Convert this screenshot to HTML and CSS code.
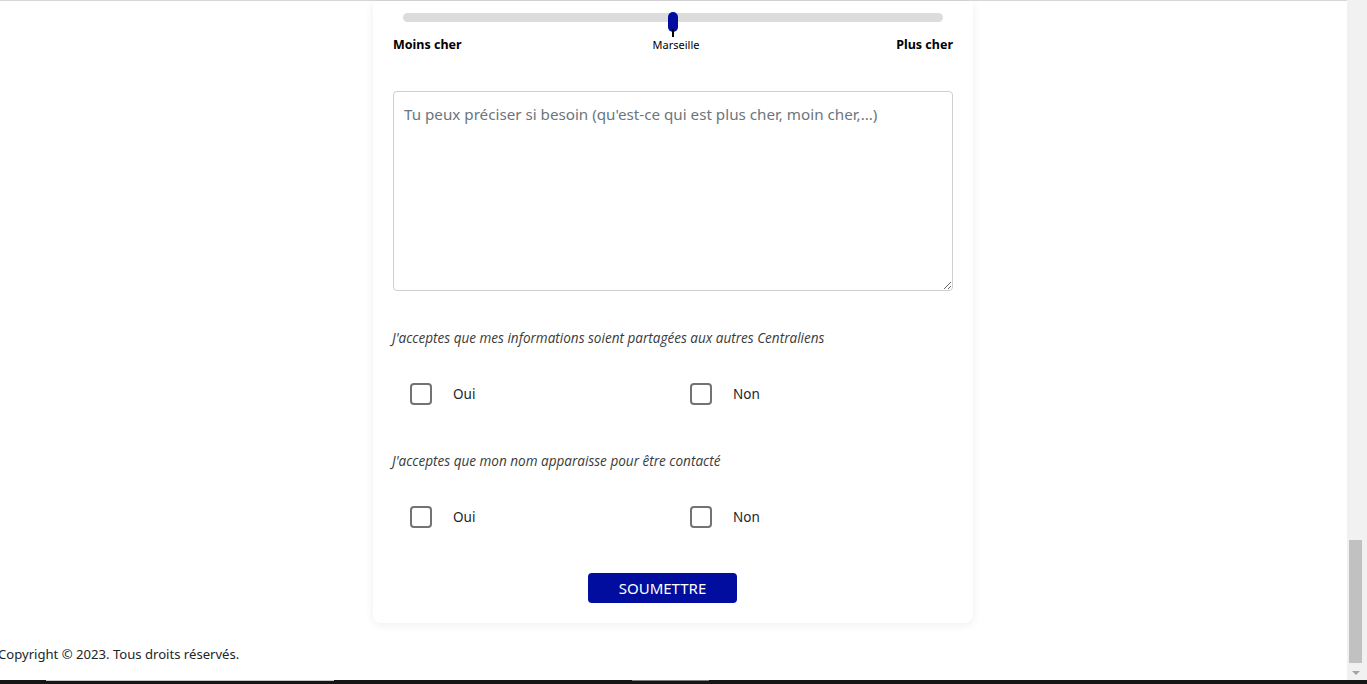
FILE: index.html
```html
<!DOCTYPE html>
<html lang="fr">
<head>
<meta charset="utf-8">
<title>Formulaire</title>
<link rel="stylesheet" href="styles.css">
</head>
<body>
<div class="page">
  <div class="main">
    <form class="card">
      <div class="slider">
        <div class="track">
          <span class="thumb"></span>
        </div>
        <div class="slider-labels">
          <span class="lbl-left">Moins cher</span>
          <span class="lbl-mid">Marseille</span>
          <span class="lbl-right">Plus cher</span>
        </div>
      </div>

      <textarea class="comment" placeholder="Tu peux préciser si besoin (qu'est-ce qui est plus cher, moin cher,...)"></textarea>

      <p class="question q1">J'acceptes que mes informations soient partagées aux autres Centraliens</p>
      <div class="choices">
        <label class="choice"><span class="box"></span><span>Oui</span></label>
        <label class="choice"><span class="box"></span><span>Non</span></label>
      </div>

      <p class="question q2">J'acceptes que mon nom apparaisse pour être contacté</p>
      <div class="choices choices2">
        <label class="choice"><span class="box"></span><span>Oui</span></label>
        <label class="choice"><span class="box"></span><span>Non</span></label>
      </div>

      <div class="actions">
        <button type="button" class="submit">SOUMETTRE</button>
      </div>
    </form>
    <footer class="footer">Copyright © 2023. Tous droits réservés.</footer>
  </div>
  <div class="scrollbar">
    <div class="sb-track"><div class="sb-thumb"></div></div>
    <div class="sb-arrow"></div>
  </div>
</div>
<div class="taskstrip">
  <span class="seg seg1"></span>
  <span class="seg seg2"></span>
</div>
</body>
</html>
```

FILE: styles.css
```css
* { box-sizing: border-box; }
html, body {
  margin: 0;
  padding: 0;
  height: 684px;
  overflow: hidden;
  background: #fff;
  font-family: "Noto Sans", "Open Sans", sans-serif;
  color: #212529;
}
.page {
  display: flex;
  height: 684px;
}
.main {
  flex: 1;
  border-top: 1px solid #d6d6d6;
  padding-right: 1px;
  display: flex;
  flex-direction: column;
  align-items: stretch;
}
.card {
  width: 600px;
  margin: 0 auto;
  background: #fff;
  border-radius: 0 0 8px 8px;
  box-shadow: 0 2px 10px rgba(0,0,0,0.07);
  padding: 0 20px 20px;
  display: flex;
  flex-direction: column;
}
.slider { padding-top: 12px; }
.track {
  position: relative;
  margin: 0 10px;
  height: 9px;
  border-radius: 5px;
  background: #dcdcdc;
}
.thumb {
  position: absolute;
  left: 265px;
  top: -1px;
  width: 10px;
  height: 20px;
  border-radius: 5px;
  background: #000d9e;
}
.thumb::after {
  content: "";
  position: absolute;
  left: 4px;
  top: 17px;
  width: 2px;
  height: 8px;
  background: #000;
}
.slider-labels {
  display: grid;
  grid-template-columns: 1fr auto 1fr;
  align-items: end;
  margin-top: 15px;
  height: 16px;
}
.lbl-left, .lbl-right {
  font-size: 12.5px;
  font-weight: 700;
  color: #000;
  line-height: 16px;
}
.lbl-right { text-align: right; }
.lbl-mid {
  font-size: 11px;
  line-height: 14px;
  color: #000;
  padding-left: 6px;
  margin-bottom: 1px;
}
.comment {
  display: block;
  margin-top: 38px;
  width: 560px;
  height: 200px;
  border: 1px solid #cfcfcf;
  border-radius: 4px;
  padding: 11px 10px;
  font-family: inherit;
  font-size: 15.2px;
  line-height: 22px;
  resize: vertical;
  color: #212529;
}
.comment::placeholder { color: #6c757d; }
.question {
  margin: 38px 0 0 -1px;
  font-family: "Open Sans", "Noto Sans", sans-serif;
  font-size: 13.55px;
  line-height: 18px;
  font-style: italic;
  color: #3a3a3a;
}
.q2 { margin-top: 47px; }
.choices {
  display: grid;
  grid-template-columns: 280px 280px;
  margin-top: 36px;
}
.choices2 { margin-top: 36px; }
.choice {
  display: flex;
  align-items: center;
  gap: 21px;
  padding-left: 17px;
  font-size: 13.5px;
  line-height: 22px;
  color: #212529;
}
.box {
  width: 22px;
  height: 22px;
  border: 2px solid #737373;
  border-radius: 4px;
  background: #fff;
  flex: none;
}
.actions {
  display: flex;
  margin-top: 45px;
  padding-left: 195px;
}
.submit {
  width: 149px;
  height: 30px;
  border: none;
  border-radius: 4px;
  background: #000d9e;
  color: #fff;
  font-family: inherit;
  font-size: 15px;
  padding: 0;
}
.footer {
  margin-top: 21px;
  font-size: 13.1px;
  line-height: 20px;
  color: #212529;
  text-indent: -2px;
}
.scrollbar {
  width: 20px;
  background: #f1f1f1;
  display: flex;
  flex-direction: column;
  padding-bottom: 4px;
}
.sb-track {
  flex: 1;
  padding: 540px 5px 0 2px;
}
.sb-thumb {
  height: 123px;
  background: #c1c1c1;
}
.sb-arrow {
  height: 14px;
  display: flex;
  justify-content: center;
  align-items: center;
}
.sb-arrow::before {
  content: "";
  border-left: 4px solid transparent;
  border-right: 4px solid transparent;
  border-top: 4px solid #a3a3a3;
  margin-right: 3px;
}
.taskstrip {
  position: fixed;
  left: 0;
  right: 0;
  bottom: 0;
  height: 4px;
  background: #161616;
}
.seg {
  position: absolute;
  top: 0;
  height: 1px;
}
.seg1 { left: 46px; width: 288px; background: #c8c8c8; }
.seg2 { left: 632px; width: 77px; background: #7a7a7a; }
```
